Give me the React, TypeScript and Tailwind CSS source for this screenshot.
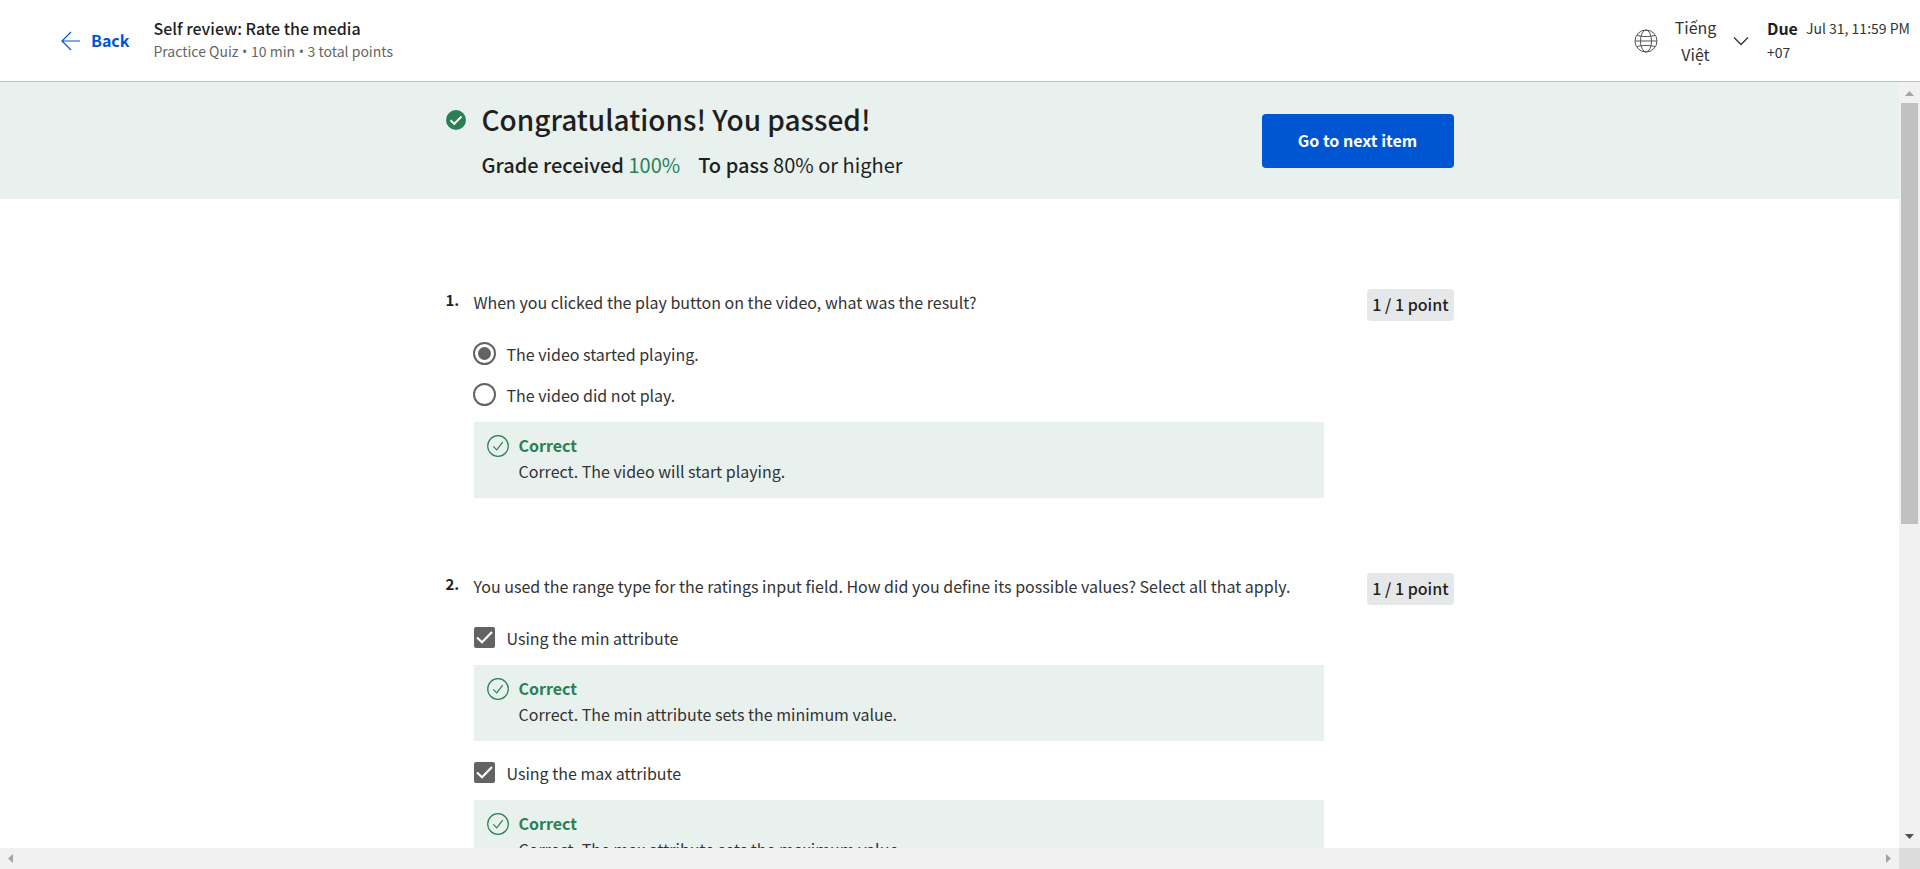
import React from "react";

type Feedback = {
  title: string;
  text: string;
};

type Option = {
  id: string;
  label: string;
  checked: boolean;
  feedback?: Feedback;
};

type QuestionData = {
  number: number;
  type: "radio" | "checkbox";
  text: string;
  points: string;
  options: Option[];
};

const quizDetails = ["Practice Quiz", "10 min", "3 total points"];

const questions: QuestionData[] = [
  {
    number: 1,
    type: "radio",
    text: "When you clicked the play button on the video, what was the result?",
    points: "1 point",
    options: [
      { id: "started", label: "The video started playing.", checked: true },
      {
        id: "not-played",
        label: "The video did not play.",
        checked: false,
        feedback: { title: "Correct", text: "Correct. The video will start playing." },
      },
    ],
  },
  {
    number: 2,
    type: "checkbox",
    text: "You used the range type for the ratings input field. How did you define its possible values? Select all that apply.",
    points: "1 point",
    options: [
      {
        id: "min",
        label: "Using the min attribute",
        checked: true,
        feedback: { title: "Correct", text: "Correct. The min attribute sets the minimum value." },
      },
      {
        id: "max",
        label: "Using the max attribute",
        checked: true,
        feedback: { title: "Correct", text: "Correct. The max attribute sets the maximum value." },
      },
    ],
  },
];

function ArrowLeftIcon() {
  return (
    <svg className="w-5 h-5" viewBox="0 0 20 20" fill="none" stroke="currentColor" strokeWidth="1.2" aria-hidden="true">
      <path d="M10 1 1 10l9 9M1 10h18" />
    </svg>
  );
}

function GlobeIcon() {
  return (
    <svg className="w-6 h-6 shrink-0" viewBox="0 0 24 24" fill="none" stroke="#555" strokeWidth="1" aria-hidden="true">
      <circle cx="12" cy="12" r="11" />
      <ellipse cx="12" cy="12" rx="5.5" ry="11" />
      <path d="M1 12h22M3 6.500c5 1.400 13 1.400 18 0M3 17.500c5-1.400 13-1.400 18 0" />
    </svg>
  );
}

function ChevronDownIcon() {
  return (
    <svg className="w-4 h-4 shrink-0" viewBox="0 0 16 16" fill="none" stroke="#333" strokeWidth="1.300" aria-hidden="true">
      <path d="m1 4.500 7 7 7-7" />
    </svg>
  );
}

function PassedIcon() {
  return (
    <svg className="mt-0.5 w-5 h-5 shrink-0" viewBox="0 0 20 20" fill="none" aria-hidden="true">
      <circle cx="10" cy="10" r="10" fill="#2a8055" />
      <path d="m4.500 10.200 3.700 3.700 7.300-7.400" stroke="#fff" strokeWidth="2" />
    </svg>
  );
}

function CorrectIcon() {
  return (
    <svg
      className="w-[22px] h-[22px] shrink-0"
      viewBox="0 0 22 22"
      fill="none"
      stroke="#2a8055"
      strokeWidth="1.200"
      aria-hidden="true"
    >
      <circle cx="11" cy="11" r="10.300" />
      <path d="m6.300 11.300 3.400 3.500 6-7.600" />
    </svg>
  );
}

function Header() {
  return (
    <header className="flex h-[82px] shrink-0 items-center border-b border-[#bdc1c0] bg-white pl-[61px] pr-2">
      <a href="#back" className="flex items-center gap-[10px] text-[16px] leading-6 font-bold text-[#0056d2]">
        <ArrowLeftIcon />
        <span className="pb-[2px]">Back</span>
      </a>
      <div className="ml-6 flex-1 pb-[2px]">
        <h1 className="text-[16px] leading-6 font-medium text-[#1f1f1f]">Self review: Rate the media</h1>
        <p className="text-[14px] leading-[22px] text-[#666]">
          {quizDetails.map((detail, index) => (
            <React.Fragment key={detail}>
              {index > 0 && <span className="font-['Open_Sans',sans-serif]"> • </span>}
              {detail}
            </React.Fragment>
          ))}
        </p>
      </div>
      <button type="button" className="flex items-center gap-4 text-[#333]">
        <GlobeIcon />
        <span className="w-[43px] text-center text-[16px] leading-[27px]">Tiếng Việt</span>
        <ChevronDownIcon />
      </button>
      <div className="ml-[18px] w-[145px] pb-[2px] text-[14px] leading-6 whitespace-nowrap text-[#333]">
        <div className="flex gap-2">
          <span className="text-[16px] font-bold text-[#1f1f1f]">Due</span>
          <span>Jul 31, 11:59 PM</span>
        </div>
        <div>+07</div>
      </div>
    </header>
  );
}

function ResultBanner() {
  return (
    <section className="bg-[#e8f1ee] pt-5 pb-[19px]">
      <div className="mx-auto flex max-w-[1008px] items-center justify-between">
        <div className="grid grid-cols-[20px_auto] items-center gap-x-4">
          <PassedIcon />
          <h2 className="text-[28px] leading-[34px] font-medium text-[#1f1f1f]">Congratulations! You passed!</h2>
          <p className="col-start-2 pt-[14px] text-[20px] leading-[30px] text-[#1f1f1f]">
            <span className="font-medium">Grade received</span> <span className="text-[#2a8055]">100%</span>
            <span className="ml-[18px] font-medium">To pass</span> 80% or higher
          </p>
        </div>
        <button
          type="button"
          className="h-[54px] w-[192px] rounded bg-[#0056d2] pb-[2px] text-[16px] font-bold text-white"
        >
          Go to next item
        </button>
      </div>
    </section>
  );
}

function FeedbackBox({ title, text }: Feedback) {
  return (
    <div className="mt-[6px] mb-3 flex gap-[10px] bg-[#e8f1ee] pt-[10px] pb-[14px] pl-[13px] text-[16px] leading-[26px]">
      <div className="flex h-7 items-center">
        <CorrectIcon />
      </div>
      <div>
        <p className="font-bold text-[#2a8055]">{title}</p>
        <p className="text-[#333]">{text}</p>
      </div>
    </div>
  );
}

function Choice({ type, name, option }: { type: "radio" | "checkbox"; name: string; option: Option }) {
  const id = `${name}-${option.id}`;

  return (
    <>
      <div className="flex h-[41px] items-center pb-[2px]">
        {type === "radio" ? (
          <input
            id={id}
            type="radio"
            name={name}
            defaultChecked={option.checked}
            className="-ml-px mr-[11px] h-[23px] w-[23px] appearance-none rounded-full border-2 border-[#636363] bg-white bg-clip-content p-[3px] checked:bg-[#636363]"
          />
        ) : (
          <span className="mr-3 grid">
            <input
              id={id}
              type="checkbox"
              name={name}
              defaultChecked={option.checked}
              className="peer col-start-1 row-start-1 h-[21px] w-[21px] appearance-none rounded-xs border-2 border-[#636363] checked:bg-[#636363]"
            />
            <svg
              className="pointer-events-none invisible col-start-1 row-start-1 h-[21px] w-[21px] peer-checked:visible"
              viewBox="0 0 21 21"
              fill="none"
              stroke="#fff"
              strokeWidth="2.200"
              aria-hidden="true"
            >
              <path d="m3 10.500 5 4.700L18 5" />
            </svg>
          </span>
        )}
        <label htmlFor={id} className="text-[16px] leading-6 text-[#333]">
          {option.label}
        </label>
      </div>
      {option.feedback && <FeedbackBox {...option.feedback} />}
    </>
  );
}

function Question({ question }: { question: QuestionData }) {
  return (
    <section className="mb-[63px] grid grid-cols-[28px_850px_1fr]">
      <span className="text-[15px] leading-[22px] font-bold text-[#1f1f1f]">{question.number}.</span>
      <fieldset className="min-w-0">
        <legend className="mb-[18px] text-[16px] leading-[27px] text-[#333]">{question.text}</legend>
        {question.options.map((option) => (
          <Choice key={option.id} type={question.type} name={`question-${question.number}`} option={option} />
        ))}
      </fieldset>
      <div className="h-8 justify-self-end rounded bg-[#e5e7e8] px-[5px] text-[16px] leading-[31px] font-medium whitespace-nowrap text-[#1f1f1f]">
        1 / {question.points}
      </div>
    </section>
  );
}

function VerticalScrollbar() {
  return (
    <div className="flex flex-col items-center bg-[#f1f1f1]" aria-hidden="true">
      <svg className="h-[21px] w-[21px] shrink-0" viewBox="0 0 21 21">
        <path d="M6 14h9l-4.500-5z" fill="#a3a3a3" />
      </svg>
      <div className="w-[17px] basis-[55%] bg-[#c1c1c1]" />
      <div className="flex-1" />
      <svg className="h-[21px] w-[21px] shrink-0" viewBox="0 0 21 21">
        <path d="M6 7h9l-4.500 5z" fill="#505050" />
      </svg>
    </div>
  );
}

function HorizontalScrollbar() {
  return (
    <div className="flex items-center justify-between bg-[#f1f1f1]" aria-hidden="true">
      <svg className="h-[21px] w-[21px]" viewBox="0 0 21 21">
        <path d="M13 6v9l-5-4.500z" fill="#a3a3a3" />
      </svg>
      <svg className="h-[21px] w-[21px]" viewBox="0 0 21 21">
        <path d="M8 6v9l5-4.500z" fill="#a3a3a3" />
      </svg>
    </div>
  );
}

export default function App() {
  return (
    <div className="flex h-screen flex-col bg-white font-['Noto_Sans_CJK_SC','Noto_Sans',sans-serif]">
      <Header />
      <div className="grid min-h-0 flex-1 grid-cols-[1fr_21px] grid-rows-[minmax(0,1fr)_21px]">
        <main className="overflow-auto [scrollbar-width:none]">
          <ResultBanner />
          <div className="mx-auto max-w-[1008px] pt-[90px]">
            {questions.map((question) => (
              <Question key={question.number} question={question} />
            ))}
          </div>
        </main>
        <VerticalScrollbar />
        <HorizontalScrollbar />
        <div className="bg-[#dcdcdc]" />
      </div>
    </div>
  );
}
